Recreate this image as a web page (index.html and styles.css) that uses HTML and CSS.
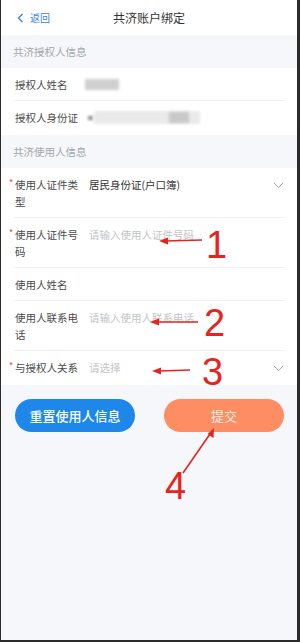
FILE: index.html
```html
<!DOCTYPE html>
<html lang="zh-CN">
<head>
<meta charset="utf-8">
<title>共济账户绑定</title>
<link rel="stylesheet" href="styles.css">
</head>
<body>
<div class="frame">
  <header class="nav">
    <a class="back">
      <svg class="back-icon" width="7" height="10" viewBox="0 0 7 10"><path d="M5.5 1 L1.5 5 L5.5 9" fill="none" stroke="#3b82e6" stroke-width="1.4"/></svg>
      <span>返回</span>
    </a>
    <h1 class="title">共济账户绑定</h1>
  </header>

  <div class="section-title">共济授权人信息</div>
  <div class="group">
    <div class="row">
      <div class="label">授权人姓名</div>
      <div class="value"><span class="blur blur-name"></span></div>
    </div>
    <div class="row row-last">
      <div class="label">授权人身份证</div>
      <div class="value id-value"><span class="blur blur-dot"></span><span class="blur blur-id"></span><span class="blur blur-id-dark"></span></div>
    </div>
  </div>

  <div class="section-title">共济使用人信息</div>
  <div class="group">
    <div class="row">
      <div class="label required">使用人证件类型</div>
      <div class="value text">居民身份证(户口簿)</div>
      <svg class="chevron" width="11" height="7" viewBox="0 0 11 7"><path d="M1 1 L5.5 5.5 L10 1" fill="none" stroke="#a8a8a8" stroke-width="1"/></svg>
    </div>
    <div class="row">
      <div class="label required">使用人证件号码</div>
      <div class="value placeholder">请输入使用人证件号码</div>
    </div>
    <div class="row">
      <div class="label">使用人姓名</div>
      <div class="value"></div>
    </div>
    <div class="row">
      <div class="label">使用人联系电话</div>
      <div class="value placeholder">请输入使用人联系电话</div>
    </div>
    <div class="row row-last">
      <div class="label required">与授权人关系</div>
      <div class="value placeholder">请选择</div>
      <svg class="chevron" width="11" height="7" viewBox="0 0 11 7"><path d="M1 1 L5.5 5.5 L10 1" fill="none" stroke="#a8a8a8" stroke-width="1"/></svg>
    </div>
  </div>

  <div class="actions">
    <button class="btn btn-reset">重置使用人信息</button>
    <button class="btn btn-submit">提交</button>
  </div>

  <svg class="annot" width="296" height="640" viewBox="0 0 296 640">
    <g stroke="#e8231d" stroke-width="1.6" fill="#e8231d">
      <line x1="201" y1="240" x2="165" y2="241"/>
      <polygon points="158,241 167,237.5 167,244.5" stroke="none"/>
      <line x1="197" y1="322" x2="156" y2="322"/>
      <polygon points="149,322 158,318.5 158,325.5" stroke="none"/>
      <line x1="189" y1="370" x2="158" y2="371"/>
      <polygon points="151,371 160,367.5 160,374.5" stroke="none"/>
      <line x1="182" y1="473" x2="209" y2="434"/>
      <polygon points="213,428 212.5,438 206.5,434" stroke="none"/>
    </g>
    <g class="annot-num" fill="#e8231d">
      <text x="205" y="258">1</text>
      <text x="203" y="336">2</text>
      <text x="201" y="385">3</text>
      <text x="164" y="499">4</text>
    </g>
  </svg>
</div>
</body>
</html>
```

FILE: styles.css
```css
* { box-sizing: border-box; }
html, body { margin: 0; padding: 0; }
body {
  width: 300px;
  height: 642px;
  overflow: hidden;
  font-family: "Noto Sans CJK SC", "Noto Sans", sans-serif;
  background: #f5f7fa;
}
.frame {
  position: relative;
  width: 300px;
  height: 642px;
  background: #f5f7fa;
  border-left: 1px solid #2b2b2b;
  border-right: 3px solid #2b2b2b;
  border-bottom: 2px solid #2b2b2b;
  display: flex;
  flex-direction: column;
}
.nav {
  height: 35px;
  background: #fff;
  display: flex;
  align-items: center;
  justify-content: center;
  position: relative;
}
.back {
  position: absolute;
  left: 16px;
  top: 0;
  height: 35px;
  display: flex;
  align-items: center;
  gap: 6px;
  color: #3b82e6;
  font-size: 10px;
}
.back-icon { display: block; }
.title {
  margin: 0;
  font-size: 12px;
  font-weight: 400;
  color: #333;
}
.section-title {
  height: 33px;
  line-height: 33px;
  padding-left: 12px;
  font-size: 10.5px;
  color: #a3a7ad;
  background: #f5f7fa;
}
.group {
  background: #fff;
}
.row {
  position: relative;
  display: flex;
  align-items: flex-start;
  margin: 0 12px 0 13px;
  padding: 8px 0 7px;
  border-bottom: 1px solid #eff0f2;
  font-size: 10.5px;
  line-height: 17px;
  min-height: 33px;
}
.row-last { border-bottom: none; min-height: 34px; }
.label {
  width: 66px;
  padding-left: 1px;
  color: #4a4a4a;
  position: relative;
}
.label.required::before {
  content: "*";
  position: absolute;
  left: -5px;
  top: -2px;
  color: #e8452f;
  font-size: 9px;
}
.value {
  flex: 1;
  margin-left: 9px;
  position: relative;
  height: 17px;
}
.value.text { color: #333; }
.value.placeholder { color: #c2c4c8; }
.chevron {
  position: absolute;
  right: 1px;
  top: 14px;
}
.blur {
  position: absolute;
  display: block;
  filter: blur(1.5px);
}
.blur-name {
  left: -4px;
  top: 3px;
  width: 34px;
  height: 11px;
  background: #cfcfcf;
}
.blur-dot {
  left: -1px;
  top: 7px;
  width: 5px;
  height: 4px;
  background: #8a8a8a;
}
.blur-id {
  left: 5px;
  top: 2px;
  width: 106px;
  height: 13px;
  background: #eaeaea;
}
.blur-id-dark {
  left: 80px;
  top: 3px;
  width: 20px;
  height: 11px;
  background: #c9c9c9;
}
.actions {
  display: flex;
  justify-content: space-between;
  padding: 14px 13px 0 14px;
}
.btn {
  width: 120px;
  height: 33px;
  border: none;
  border-radius: 17px;
  font-family: "Noto Sans CJK SC", "Noto Sans", sans-serif;
  font-size: 13px;
  color: #fff;
  padding: 0;
}
.btn-reset {
  background: #1e88ea;
  font-weight: 500;
}
.btn-submit {
  background: #fe8d64;
  color: #fde9e0;
}
.annot {
  position: absolute;
  left: 0;
  top: 0;
  pointer-events: none;
}
.annot-num text {
  font-family: "Liberation Sans", Arial, sans-serif;
  font-size: 38px;
  font-weight: 400;
}
```
